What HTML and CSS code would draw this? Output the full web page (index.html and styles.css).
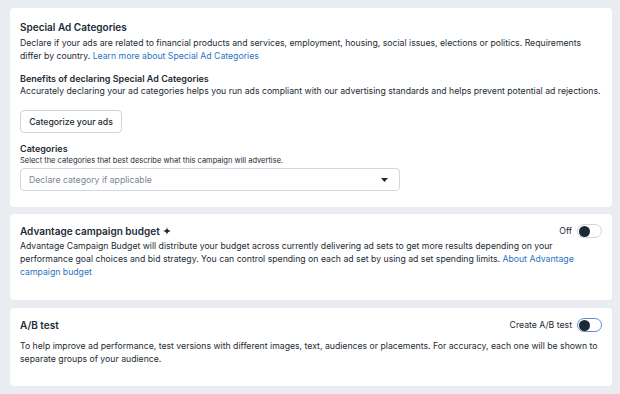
FILE: index.html
```html
<!DOCTYPE html>
<html lang="en">
<head>
  <meta charset="UTF-8" />
  <title>Campaign settings</title>
  <link rel="stylesheet" href="styles.css">
</head>
<body>
  <div class="page">
    <section class="card card-special">
      <h2>Special Ad Categories</h2>
      <p class="desc">Declare if your ads are related to financial products and services, employment, housing, social issues, elections or politics. Requirements<br>differ by country. <a href="#">Learn more about Special Ad Categories</a></p>

      <h3 class="benefits">Benefits of declaring Special Ad Categories</h3>
      <p class="desc">Accurately declaring your ad categories helps you run ads compliant with our advertising standards and helps prevent potential ad rejections.</p>

      <button class="btn">Categorize your ads</button>

      <h3 class="cat-title">Categories</h3>
      <p class="hint">Select the categories that best describe what this campaign will advertise.</p>
      <div class="select">
        <span>Declare category if applicable</span>
        <svg class="caret" width="7" height="4" viewBox="0 0 7 4"><path d="M0 0h7L3.5 4z" fill="#1c2b33"/></svg>
      </div>
    </section>

    <section class="card card-budget">
      <div class="card-head">
        <h2>Advantage campaign budget
          <svg class="sparkle" width="8" height="8" viewBox="0 0 10 10"><path d="M5 0C5.4 3.2 6.8 4.6 10 5 6.8 5.4 5.4 6.8 5 10 4.6 6.8 3.2 5.4 0 5 3.2 4.6 4.6 3.2 5 0z" fill="#1c2b33"/></svg>
        </h2>
        <label class="switch-row">
          <span>Off</span>
          <span class="switch"><span class="knob"></span></span>
        </label>
      </div>
      <p class="desc">Advantage Campaign Budget will distribute your budget across currently delivering ad sets to get more results depending on your<br>performance goal choices and bid strategy. You can control spending on each ad set by using ad set spending limits. <a href="#">About Advantage<br>campaign budget</a></p>
    </section>

    <section class="card card-ab">
      <div class="card-head">
        <h2>A/B test</h2>
        <label class="switch-row">
          <span>Create A/B test</span>
          <span class="switch focus"><span class="knob"></span></span>
        </label>
      </div>
      <p class="desc">To help improve ad performance, test versions with different images, text, audiences or placements. For accuracy, each one will be shown to<br>separate groups of your audience.</p>
    </section>
  </div>
</body>
</html>
```

FILE: styles.css
```css
body {
  margin: 0;
  background-color: #e9edf2;
  font-family: Inter, "Noto Sans", sans-serif;
  color: #1c2b33;
}

.page {
  display: flex;
  flex-direction: column;
  gap: 7px;
  padding: 8px 8px 8px 10px;
}

.card {
  background: #ffffff;
  border-radius: 4px;
  padding: 12px 10px 16px;
}

h2 {
  margin: 0;
  font-size: 10px;
  line-height: 14px;
  font-weight: 600;
  display: flex;
  align-items: center;
  gap: 3px;
}

h3 {
  margin: 0;
  font-size: 9px;
  line-height: 13px;
  font-weight: 600;
}

.desc {
  margin: 0;
  font-size: 8.7px;
  line-height: 13px;
}

a {
  color: #2b74c0;
  text-decoration: none;
}

.card-special h2 {
  margin-bottom: 3px;
}

.benefits {
  margin-top: 9px;
}

.btn {
  display: block;
  margin-top: 12px;
  width: 102px;
  height: 23px;
  border: 1px solid #cdd3da;
  border-radius: 4px;
  background: #ffffff;
  font-family: inherit;
  font-size: 8.7px;
  font-weight: 500;
  color: #1c2b33;
  padding: 0;
}

.cat-title {
  margin-top: 9px;
}

.hint {
  margin: 0;
  font-size: 7.5px;
  line-height: 11px;
}

.select {
  margin-top: 2px;
  width: 380px;
  height: 23px;
  box-sizing: border-box;
  border: 1px solid #d3d8de;
  border-radius: 4px;
  display: flex;
  align-items: center;
  justify-content: space-between;
  padding: 0 11px 0 8px;
  font-size: 8.7px;
  color: #7d868f;
}

.card-head {
  display: flex;
  align-items: center;
  justify-content: space-between;
}

.card-budget {
  padding: 10px 10px 21px;
}

.card-budget .card-head {
  margin-bottom: 2px;
}

.card-ab {
  margin-top: 1px;
  padding: 10px 10px 20px;
}

.card-ab .card-head {
  margin-bottom: 8px;
}

.switch-row {
  display: flex;
  align-items: center;
  gap: 5px;
  font-size: 8.7px;
}

.switch {
  width: 25px;
  height: 14px;
  box-sizing: border-box;
  border: 1px solid #d0d6dc;
  border-radius: 7px;
  background: #ffffff;
  display: flex;
  align-items: center;
  padding: 0 1px;
}

.switch.focus {
  border-color: #5d8fd3;
}

.knob {
  width: 11px;
  height: 11px;
  border-radius: 50%;
  background: #1c2b33;
}
```
